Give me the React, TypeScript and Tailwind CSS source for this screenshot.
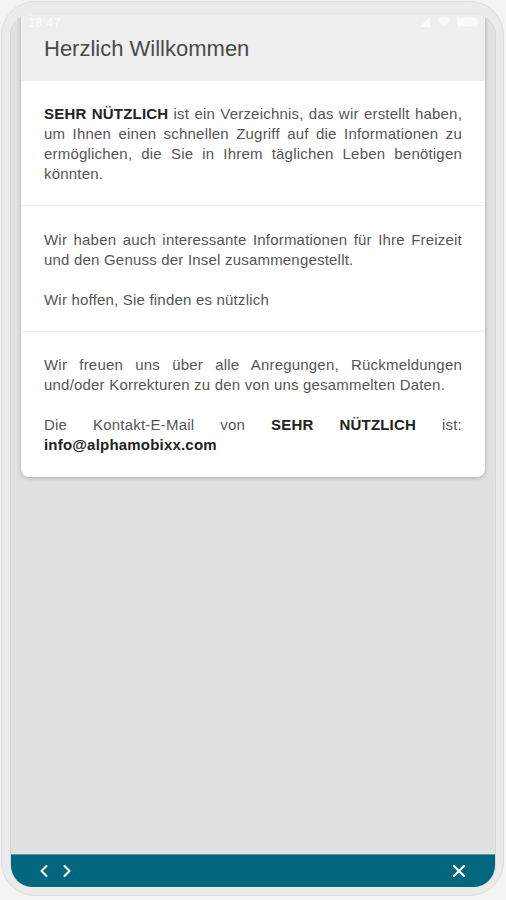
import React from 'react';
import { ChevronLeft, ChevronRight, X } from 'lucide-react';

const font = { fontFamily: '"Liberation Sans", Arial, sans-serif' };

// Status bar icons, drawn faint white over the card header
const StatusIcons = () => (
  <div className="flex items-center gap-[6px]">
    <svg width="12" height="10" viewBox="0 0 12 10">
      <path d="M11 0 L11 10 L0 10 Z" fill="#ffffff" />
    </svg>
    <svg width="14" height="10" viewBox="0 0 14 10">
      <path d="M0 2.5 Q7 -2.5 14 2.5 L7 10 Z" fill="#ffffff" />
    </svg>
    <svg width="22" height="10" viewBox="0 0 22 10">
      <rect x="0" y="0.5" width="20" height="9" rx="1.5" fill="#ffffff" />
      <rect x="20.5" y="3" width="1.5" height="4" fill="#ffffff" />
    </svg>
  </div>
);

const Strong = ({ children }: { children: React.ReactNode }) => (
  <span className="font-bold text-[#222]">{children}</span>
);

const body = 'text-[15px] leading-[20px] tracking-[0.2px] text-[#555] text-justify';

export default function App() {
  return (
    <div className="w-[506px] h-[900px] bg-[#f4f4f4] pt-[1px] pl-[1px] pr-[2px]" style={font}>
      <div className="h-[895px] rounded-[34px] bg-[#ebebeb] border border-[#dedede] pt-[13px] pl-[8px] pr-[7px] pb-[8px]">
        <div className="relative h-full flex flex-col bg-[#e1e1e1] rounded-t-[20px] rounded-b-[22px] overflow-hidden border-l border-r border-[#d6d6d6]">
          <div className="absolute top-0 left-0 right-0 h-[14px] flex items-center justify-between pl-[17px] pr-[16px] opacity-70 z-10">
            <span className="text-[13px] leading-none text-white">18:47</span>
            <StatusIcons />
          </div>

          <div className="mx-[10px] bg-white rounded-b-[8px] shadow-[0_1px_4px_rgba(0,0,0,0.25)] overflow-hidden">
            <div className="h-[66px] bg-[#efefef] flex items-center pl-[23px]">
              <h1 className="text-[22px] text-[#4a4a4a]">Herzlich Willkommen</h1>
            </div>

            <div className={`px-[23px] pt-[23px] pb-[21px] border-b border-[#eeeeee] ${body}`}>
              <p>
                <Strong>SEHR NÜTZLICH</Strong> ist ein Verzeichnis, das wir erstellt haben, um Ihnen einen schnellen Zugriff auf die Informationen zu ermöglichen, die Sie in Ihrem täglichen Leben benötigen könnten.
              </p>
            </div>

            <div className={`px-[23px] pt-[24px] pb-[21px] border-b border-[#eeeeee] flex flex-col gap-[20px] ${body}`}>
              <p>Wir haben auch interessante Informationen für Ihre Freizeit und den Genuss der Insel zusammengestellt.</p>
              <p>Wir hoffen, Sie finden es nützlich</p>
            </div>

            <div className={`px-[23px] pt-[23px] pb-[22px] flex flex-col gap-[20px] ${body}`}>
              <p>Wir freuen uns über alle Anregungen, Rückmeldungen und/oder Korrekturen zu den von uns gesammelten Daten.</p>
              <p>
                Die Kontakt-E-Mail von <Strong>SEHR NÜTZLICH</Strong> ist: <Strong>info@alphamobixx.com</Strong>
              </p>
            </div>
          </div>

          <div className="flex-1" />

          <div className="h-[33px] bg-[#00677f] flex items-center justify-between pl-[23px] pr-[26px] border-t border-[#5a9aaa]">
            <div className="flex items-center gap-[3px] text-white">
              <ChevronLeft size={20} strokeWidth={2.5} />
              <ChevronRight size={20} strokeWidth={2.5} />
            </div>
            <X size={20} strokeWidth={2.5} className="text-white" />
          </div>
        </div>
      </div>
    </div>
  );
}
